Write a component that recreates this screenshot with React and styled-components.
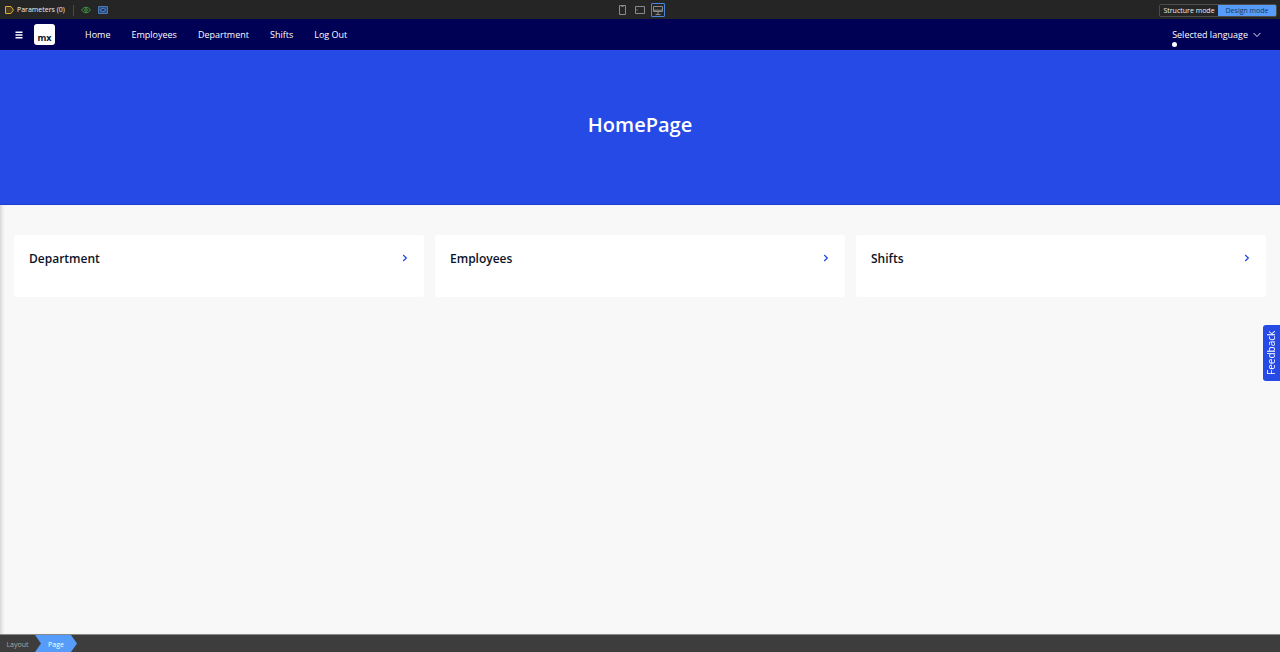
import React from "react";
import styled, { createGlobalStyle } from "styled-components";

const GlobalStyle = createGlobalStyle`
  * {
    box-sizing: border-box;
  }

  body {
    margin: 0;
    font-family: "Open Sans", "Noto Sans", sans-serif;
    background: #f8f8f8;
  }

  button {
    font-family: inherit;
    margin: 0;
    padding: 0;
    border: 0;
    background: none;
    cursor: pointer;
  }

  svg {
    display: block;
  }
`;

const PageStyled = styled.div`
  display: flex;
  flex-direction: column;
  min-height: 100vh;
`;

const ToolbarStyled = styled.div`
  display: grid;
  grid-template-columns: 1fr auto 1fr;
  align-items: center;
  height: 19px;
  padding: 1px 3px 0;
  background: #252525;
  color: #f0f0f0;
`;

const ToolbarGroup = styled.div`
  display: flex;
  align-items: center;
  justify-content: ${({ $end }) => ($end ? "flex-end" : "flex-start")};
  gap: ${({ $gap }) => $gap || 0}px;
`;

const ParametersButton = styled.button`
  display: flex;
  align-items: center;
  gap: 3px;
  padding: 0 1px 0 2px;
  color: #f0f0f0;
  font-size: 7px;
  font-weight: 500;
  line-height: 12px;
`;

const ToolbarDivider = styled.span`
  width: 1px;
  height: 11px;
  background: #4a4a4a;
`;

const DeviceButton = styled.button`
  display: flex;
  align-items: center;
  justify-content: center;
  width: 14px;
  height: 14px;
  border: 1px solid ${({ $active }) => ($active ? "#4a86d8" : "transparent")};
  border-radius: 1px;
`;

const ModeSwitch = styled.div`
  display: flex;
  height: 13px;
  border: 1px solid #4c4c4c;
  border-radius: 2px;
  overflow: hidden;
`;

const ModeButton = styled.button`
  width: 58px;
  font-size: 7px;
  font-weight: 500;
  line-height: 11px;
  color: ${({ $active }) => ($active ? "#17365f" : "#f0f0f0")};
  background: ${({ $active }) => ($active ? "#559cfb" : "#252525")};
`;

const NavbarStyled = styled.header`
  display: flex;
  align-items: center;
  height: 31px;
  padding: 0 19px 0 15px;
  background: #000055;
`;

const MenuButton = styled.button`
  width: 8px;
`;

const LogoStyled = styled.div`
  display: flex;
  align-items: flex-end;
  justify-content: center;
  width: 21px;
  height: 21px;
  margin-left: 11px;
  padding-bottom: 1px;
  border-radius: 3px;
  background: #fff;
  color: #0a1326;
  font-size: 9px;
  font-weight: 700;
  line-height: 12px;
`;

const NavStyled = styled.nav`
  display: flex;
  flex: 1;
  gap: 21px;
  margin-left: 30px;
`;

const NavLink = styled.a`
  color: #fff;
  font-size: 9px;
  font-weight: 500;
  line-height: 16px;
  text-decoration: none;
`;

const LanguageStyled = styled.div`
  position: relative;
`;

const LanguageButton = styled.button`
  display: flex;
  align-items: center;
  gap: 5px;
  color: #fff;
  font-size: 9px;
  font-weight: 500;
  line-height: 16px;
`;

const LanguageDot = styled.span`
  position: absolute;
  left: 0;
  bottom: -4px;
  width: 5px;
  height: 5px;
  border-radius: 50%;
  background: #fff;
`;

const BannerStyled = styled.section`
  display: flex;
  align-items: center;
  justify-content: center;
  padding: 60px 0 64px;
  background: #264ae5;
  border-bottom: 1px solid #2140cf;

  h1 {
    margin: 0;
    color: #fff;
    font-size: 20px;
    font-weight: 600;
    line-height: 30px;
  }
`;

const ContentStyled = styled.main`
  flex: 1;
  padding: 30px 14px;
  background: #f8f8f8;
  box-shadow: inset 4px 0 4px -3px #c8c8c8;
`;

const CardGrid = styled.div`
  display: grid;
  grid-template-columns: repeat(3, 1fr);
  gap: 11px;
`;

const CardStyled = styled.a`
  display: flex;
  align-items: flex-start;
  justify-content: space-between;
  min-height: 62px;
  padding: 16px 16px 14px 15px;
  border-radius: 3px;
  background: #fff;
  color: #0a1326;
  text-decoration: none;

  h2 {
    margin: 0;
    font-size: 12px;
    font-weight: 600;
    line-height: 16px;
  }

  svg {
    margin-top: 3px;
  }
`;

const FeedbackButton = styled.button`
  position: fixed;
  right: 0;
  top: 325px;
  width: 17px;
  height: 56px;
  border-radius: 0 3px 3px 0;
  background: #264ae5;
  color: #fff;
  font-size: 10px;
  font-weight: 500;
  line-height: 16px;
  writing-mode: vertical-rl;
  transform: rotate(180deg);
`;

const BreadcrumbStyled = styled.footer`
  display: flex;
  align-items: stretch;
  height: 18px;
  border-top: 1px solid #8a8a8a;
  background: #3d3d3d;
`;

const Crumb = styled.button`
  padding-top: 2px;
  font-size: 7px;
  font-weight: 500;
  line-height: 14px;
  color: ${({ $active }) => ($active ? "#fff" : "#a8a8a8")};
  background: ${({ $active }) => ($active ? "#559cfb" : "transparent")};
  width: ${({ $active }) => ($active ? 42 : 35)}px;
  clip-path: ${({ $active }) =>
    $active
      ? "polygon(0 0, 36px 0, 100% 50%, 36px 100%, 0 100%, 6px 50%)"
      : "none"};
`;

const ParametersIcon = () => (
  <svg width="9" height="8" viewBox="0 0 9 8" fill="#4a3c1c" stroke="#dba93c">
    <path d="M.5.5H6L8.5 4 6 7.5H.5Z" />
  </svg>
);

const EyeIcon = () => (
  <svg width="10" height="8" viewBox="0 0 10 8" fill="none" stroke="#3f9a41">
    <path d="M.5 4Q5-1.6 9.5 4 5 9.6.5 4Z" />
    <circle cx="5" cy="4" r="1.3" />
  </svg>
);

const PreviewIcon = () => (
  <svg width="10" height="8" viewBox="0 0 10 8" fill="none">
    <path d="M.5.5h9v7h-9z" fill="#294d80" stroke="#4a78b8" />
    <path d="M2 4Q5 .5 8 4 5 7.5 2 4Z" stroke="#5a8ace" strokeWidth=".8" />
    <circle cx="5" cy="4" r="1" fill="#1c3050" />
  </svg>
);

const PhoneIcon = () => (
  <svg width="7" height="10" viewBox="0 0 7 10" fill="none" stroke="#8c8c8c">
    <path d="M.5.5h6v9h-6z" />
    <path d="M2.5 1.5h2" />
  </svg>
);

const TabletIcon = () => (
  <svg width="10" height="8" viewBox="0 0 10 8" fill="none" stroke="#8c8c8c">
    <path d="M.5.5h9v7h-9z" />
    <path d="M2 3.2v1.6" strokeWidth=".8" />
  </svg>
);

const DesktopIcon = () => (
  <svg width="10" height="9" viewBox="0 0 10 9" fill="none" stroke="#8c8c8c">
    <path d="M.5.5h9v5h-9zM1 4.2h8M5 6v2M2.5 8.5h5" />
  </svg>
);

const MenuIcon = () => (
  <svg width="8" height="8" viewBox="0 0 8 8" stroke="#fff" strokeWidth="1.4">
    <path d="M.5 1.2h7M.5 4h7M.5 6.8h7" />
  </svg>
);

const ChevronDown = () => (
  <svg width="8" height="6" viewBox="0 0 8 6" fill="none" stroke="#fff">
    <path d="M.6 1 4 4.5 7.4 1" strokeWidth=".9" />
  </svg>
);

const ChevronRight = () => (
  <svg width="6" height="8" viewBox="0 0 6 8" fill="none" stroke="#264ae5">
    <path d="M1.2 1 4.3 4 1.2 7" strokeWidth="1.3" />
  </svg>
);

const navItems = ["Home", "Employees", "Department", "Shifts", "Log Out"];
const cards = ["Department", "Employees", "Shifts"];

const App = () => {
  return (
    <PageStyled>
      <GlobalStyle />
      <ToolbarStyled>
        <ToolbarGroup $gap={7}>
          <ParametersButton>
            <ParametersIcon />
            Parameters (0)
          </ParametersButton>
          <ToolbarDivider />
          <button aria-label="Show">
            <EyeIcon />
          </button>
          <button aria-label="Preview">
            <PreviewIcon />
          </button>
        </ToolbarGroup>
        <ToolbarGroup $gap={4}>
          <DeviceButton aria-label="Phone">
            <PhoneIcon />
          </DeviceButton>
          <DeviceButton aria-label="Tablet">
            <TabletIcon />
          </DeviceButton>
          <DeviceButton aria-label="Desktop" $active>
            <DesktopIcon />
          </DeviceButton>
        </ToolbarGroup>
        <ToolbarGroup $end>
          <ModeSwitch>
            <ModeButton>Structure mode</ModeButton>
            <ModeButton $active>Design mode</ModeButton>
          </ModeSwitch>
        </ToolbarGroup>
      </ToolbarStyled>

      <NavbarStyled>
        <MenuButton aria-label="Menu">
          <MenuIcon />
        </MenuButton>
        <LogoStyled>mx</LogoStyled>
        <NavStyled>
          {navItems.map((item) => (
            <NavLink key={item} href="#">
              {item}
            </NavLink>
          ))}
        </NavStyled>
        <LanguageStyled>
          <LanguageButton>
            Selected language
            <ChevronDown />
          </LanguageButton>
          <LanguageDot />
        </LanguageStyled>
      </NavbarStyled>

      <BannerStyled>
        <h1>HomePage</h1>
      </BannerStyled>

      <ContentStyled>
        <CardGrid>
          {cards.map((card) => (
            <CardStyled key={card} href="#">
              <h2>{card}</h2>
              <ChevronRight />
            </CardStyled>
          ))}
        </CardGrid>
      </ContentStyled>

      <FeedbackButton>Feedback</FeedbackButton>

      <BreadcrumbStyled>
        <Crumb>Layout</Crumb>
        <Crumb $active>Page</Crumb>
      </BreadcrumbStyled>
    </PageStyled>
  );
};

export default App;
